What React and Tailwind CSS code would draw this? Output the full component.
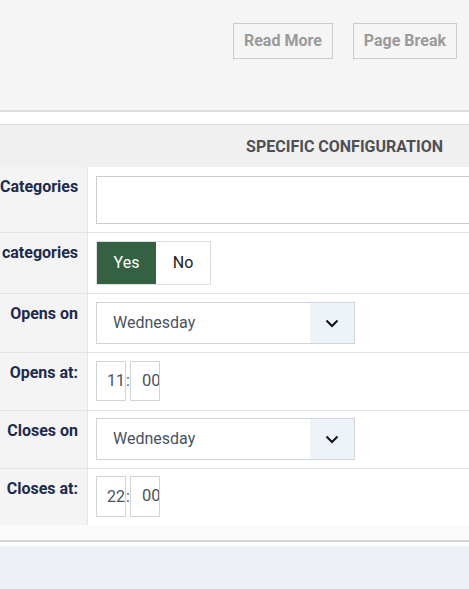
import React from 'react';

const font = { fontFamily: 'Roboto, "Liberation Sans", sans-serif' };

function Label({ children }) {
  return (
    <div className="w-[88px] shrink-0 bg-[#f4f4f4] border-r border-[#e3e4e8] pr-[9px] pt-[10px] text-right text-[16px] leading-5 font-bold text-[#1b2b4e] whitespace-nowrap">
      {children}
    </div>
  );
}

function Row({ label, last, children, className = '' }) {
  return (
    <div className={`flex ${last ? '' : 'border-b border-[#e3e4e8]'}`}>
      <Label>{label}</Label>
      <div className={`flex-1 pl-2 ${className}`}>{children}</div>
    </div>
  );
}

function DaySelect() {
  return (
    <div className="flex w-[259px] h-[42px] border border-[#d0d5dc] bg-white">
      <div className="flex-1 flex items-center pl-4 text-[16px] text-[#4a5262]">
        Wednesday
      </div>
      <div className="w-[44px] flex items-center justify-center bg-[#eef3fa]">
        <svg width="14" height="9" viewBox="0 0 14 9" fill="none">
          <path d="M1.5 1.5 7 7l5.5-5.5" stroke="#111" strokeWidth="2" />
        </svg>
      </div>
    </div>
  );
}

function TimeInput({ hours, minutes, height }) {
  return (
    <div className="flex items-start">
      <div
        className={`w-[30px] ${height} border border-[#d0d5dc] overflow-hidden flex items-center pl-[10px] text-[16px] text-[#4a5262]`}
      >
        {hours}
      </div>
      <span className="w-[4px] self-center text-[16px] text-[#4a5262] leading-none">:</span>
      <div
        className={`w-[30px] ${height} border border-[#d0d5dc] overflow-hidden flex items-center pl-[11px] text-[16.5px] text-[#4a5262] whitespace-nowrap`}
      >
        {minutes}
      </div>
    </div>
  );
}

export default function App() {
  return (
    <div className="w-[469px] h-[589px] overflow-hidden bg-white" style={font}>
      {/* editor toolbar */}
      <div className="h-[112px] bg-[#f5f5f5] border-b-2 border-[#dddddd] flex justify-end items-start gap-5 pt-[23px] pr-3">
        <button className="h-[36px] px-[10px] border border-[#cccccc] text-[16px] font-bold text-[#9a9a9a]">
          Read More
        </button>
        <button className="h-[36px] px-[10px] border border-[#cccccc] text-[16px] font-bold text-[#9a9a9a]">
          Page Break
        </button>
      </div>

      <div className="h-[12px]" />

      {/* options table */}
      <div className="border-t border-[#dcdcdc]">
        <div className="h-[42px] bg-[#f0f0f0] flex items-center justify-end pr-[26px] pt-[2px] text-[16px] font-bold text-[#4e5054] uppercase">
          Specific Configuration
        </div>

        <Row label="Categories" className="pt-[9px] pb-[8px]">
          <div className="w-[400px] h-[48px] border border-[#cccccc] bg-white" />
        </Row>

        <Row label="categories" className="py-2">
          <div className="flex w-[115px] h-[44px] border border-[#dcdfe4]">
            <div className="w-[59px] bg-[#346142] text-white flex items-center justify-center text-[16px]">
              Yes
            </div>
            <div className="flex-1 bg-white text-[#222] flex items-center justify-center text-[16px]">
              No
            </div>
          </div>
        </Row>

        <Row label="Opens on" className="py-2">
          <DaySelect />
        </Row>

        <Row label="Opens at:" className="pt-2 pb-[9px]">
          <TimeInput hours="11" minutes="00" height="h-[40px]" />
        </Row>

        <Row label="Closes on" className="pt-[7px] pb-2">
          <DaySelect />
        </Row>

        <Row label="Closes at:" last className="pt-[7px] pb-2">
          <TimeInput hours="22" minutes="00" height="h-[41px]" />
        </Row>
      </div>

      <div className="h-[17px] bg-[#fafafa] border-b-2 border-[#d5d5d5]" />
      <div className="h-[4px] bg-white" />
      <div className="h-[60px] bg-[#edf1f5]" />
    </div>
  );
}
